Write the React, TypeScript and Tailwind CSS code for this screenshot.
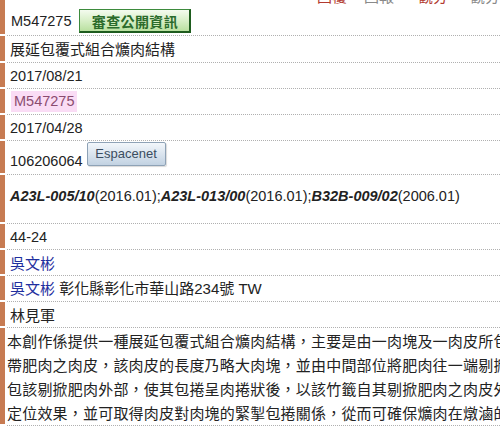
import React from "react";

function Row({
  h,
  cls,
  children,
}: {
  h: string;
  cls: string;
  children?: React.ReactNode;
}) {
  return (
    <div className={`flex ${h}`}>
      <div className="w-[5px] shrink-0 bg-[#c77b52] border-b-2 border-white" />
      <div
        className={`ml-[2px] flex-1 min-w-0 border-b border-dotted border-[#b0b0b0] flex whitespace-nowrap overflow-hidden ${cls}`}
      >
        {children}
      </div>
    </div>
  );
}

function TopStrip() {
  return (
    <div className="absolute top-0 left-0 w-[500px] h-[6px] overflow-hidden pointer-events-none">
      <div className="relative h-[6px] text-[15px] leading-[15px] font-['Noto_Sans_CJK_TC',sans-serif]">
        <span className="absolute top-[-9px] left-[307px] w-[7px] h-[7px] rounded-full bg-[#c0392b]" />
        <span className="absolute top-[-12px] left-[317px] text-[#b23a30]">回覆</span>
        <span className="absolute top-[-9px] left-[354px] w-[7px] h-[7px] rounded-full bg-[#9a9a9a]" />
        <span className="absolute top-[-12px] left-[364px] text-[#8a8a8a]">回報</span>
        <span className="absolute top-[-9px] left-[409px] w-[7px] h-[7px] rounded-full bg-[#6a9a4a]" />
        <span className="absolute top-[-12px] left-[418px] text-[#b23a30]">觀分</span>
        <span className="absolute top-[-9px] left-[459px] w-[7px] h-[7px] rounded-full bg-[#9a9a9a]" />
        <span className="absolute top-[-12px] left-[470px] text-[#8a8a8a]">觀分</span>
      </div>
    </div>
  );
}

export default function App() {
  const lat = "text-[14.5px] font-['Liberation_Sans',sans-serif]";
  return (
    <div className="relative w-[500px] h-[426px] overflow-hidden bg-white text-[#222] font-['Liberation_Sans','Noto_Sans_CJK_TC',sans-serif] leading-[24px]">
      <TopStrip />

      <Row h="h-[36px]" cls="items-center pt-[7px] pl-[4px]">
        <span className={lat}>M547275</span>
        <div className="ml-[8px] w-[112px] h-[24px] flex items-center justify-center border border-[#3d8b3d] border-r-2 border-b-2 border-r-[#1e5c1e] border-b-[#1e5c1e] bg-linear-to-b from-[#f4fbef] via-[#d8efc8] to-[#b9e09f] text-[14px] font-bold text-[#2b6b2b] tracking-[0.4px] font-['Noto_Sans_CJK_TC',sans-serif] leading-[20px]">
          審查公開資訊
        </div>
      </Row>

      <Row h="h-[27px]" cls="items-center pl-[3px]">
        <span className="text-[15px] font-['Noto_Sans_CJK_TC',sans-serif]">
          展延包覆式組合爌肉結構
        </span>
      </Row>

      <Row h="h-[26px]" cls="items-center pl-[3px]">
        <span className={lat}>2017/08/21</span>
      </Row>

      <Row h="h-[26px]" cls="items-center pl-[4px]">
        <span
          className={`${lat} bg-[#fadcf5] text-[#8b4c70] px-[3px] leading-[21px]`}
        >
          M547275
        </span>
      </Row>

      <Row h="h-[26px]" cls="items-center pl-[3px]">
        <span className={lat}>2017/04/28</span>
      </Row>

      <Row h="h-[34px]" cls="items-start pl-[3px]">
        <span className={`${lat} mt-[8px]`}>106206064</span>
        <div className="ml-[4px] mt-[1px] w-[79px] h-[24px] flex items-center justify-center rounded-[2px] border border-[#8ea2b6] bg-linear-to-b from-[#f3f7fb] to-[#c2d2e2] text-[13px] text-[#3b4d60] font-['Liberation_Sans',sans-serif] leading-[20px] shadow-[1px_1px_1px_rgba(0,0,0,0.15)]">
          Espacenet
        </div>
      </Row>

      <Row h="h-[49px]" cls="items-start pt-[9px] pl-[3px]">
        <span className={lat}>
          <b>
            <i>A23L-005/10</i>
          </b>
          (2016.01);
          <b>
            <i>A23L-013/00</i>
          </b>
          (2016.01);
          <b>
            <i>B32B-009/02</i>
          </b>
          (2006.01)
        </span>
      </Row>

      <Row h="h-[26px]" cls="items-center pl-[3px]">
        <span className={lat}>44-24</span>
      </Row>

      <Row h="h-[26px]" cls="items-center pl-[3px]">
        <span className="text-[15px] text-[#1f2f9e] font-['Noto_Sans_CJK_TC',sans-serif]">
          吳文彬
        </span>
      </Row>

      <Row h="h-[26px]" cls="items-center pl-[3px]">
        <span className="text-[15px] font-['Noto_Sans_CJK_TC',sans-serif]">
          <span className="text-[#1f2f9e]">吳文彬</span>
          <span className="font-['Liberation_Sans',sans-serif]"> </span>
          彰化縣彰化市華山路
          <span className="font-['Liberation_Sans',sans-serif]">234</span>號
          <span className="font-['Liberation_Sans',sans-serif]"> TW</span>
        </span>
      </Row>

      <Row h="h-[26px]" cls="items-center pl-[3px]">
        <span className="text-[15px] font-['Noto_Sans_CJK_TC',sans-serif]">
          林見軍
        </span>
      </Row>

      <Row h="h-[98px]" cls="flex-col items-start pt-[1px] pl-0">
        <div className="text-[15px] tracking-[0.2px] leading-[24px] font-['Noto_Sans_CJK_TC',sans-serif]">
          <div>本創作係提供一種展延包覆式組合爌肉結構，主要是由一肉塊及一肉皮所包</div>
          <div>帶肥肉之肉皮，該肉皮的長度乃略大肉塊，並由中間部位將肥肉往一端剔掀</div>
          <div>包該剔掀肥肉外部，使其包捲呈肉捲狀後，以該竹籤自其剔掀肥肉之肉皮外</div>
          <div>定位效果，並可取得肉皮對肉塊的緊掣包捲關係，從而可確保爌肉在燉滷的</div>
        </div>
      </Row>
    </div>
  );
}
